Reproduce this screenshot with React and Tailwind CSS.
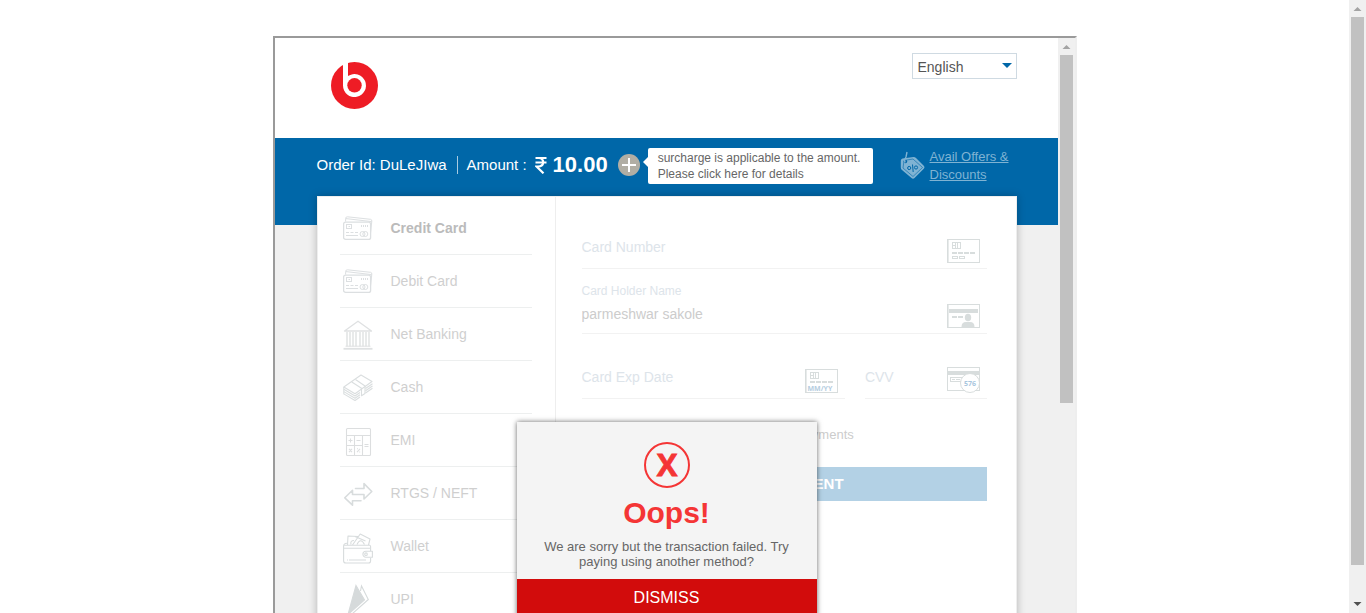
import React from "react";

function CardsIcon() {
  return (
    <svg width="30" height="26" viewBox="0 0 30 26" fill="none" stroke="#dcdfe1" strokeWidth="1">
      <path d="M2.5 6.5 L2.8 3 Q3 1.6 4.5 1.8 L27.5 4.3 Q29 4.6 28.8 6 L27.6 17.5" />
      <path d="M3 3.6 L28.6 6.6" />
      <rect x="0.6" y="7.2" width="27" height="17.2" rx="2" strokeWidth="1.3" />
      <rect x="3.5" y="9.5" width="5" height="4" />
      <path d="M5.5 11.5h1.5M18.5 10v2M20.5 10v2M22.5 10v2M24.5 10v2" />
      <path d="M3 17.5h3M7.5 17.5h3M12 17.5h3M3 20.5h12" />
      <circle cx="19.5" cy="19" r="2.5" />
      <circle cx="22.3" cy="19" r="2.5" />
    </svg>
  );
}

function BankIcon() {
  return (
    <svg width="30" height="32" viewBox="0 -2 30 32" fill="none" stroke="#dfe1e2" strokeWidth="1.3">
      <path d="M1.5 11 L15 1.2 L28.5 11 Z" strokeLinejoin="round" />
      <path d="M4 12v14.5M7 12v14.5M10 12v14.5M13 12v14.5M17 12v14.5M20 12v14.5M23 12v14.5M26 12v14.5" strokeWidth="1.4" />
      <path d="M2.5 26.2h25" strokeWidth="1" />
      <path d="M0.5 28.8h29" strokeWidth="1.8" />
    </svg>
  );
}

function CashIcon() {
  return (
    <svg width="30" height="30" viewBox="0 -2 30 30" fill="none" stroke="#dadedf" strokeWidth="1.1" strokeLinejoin="round">
      <path d="M0.8 13 L18 1 L29 7.5 L12 19.8 Z" />
      <path d="M0.8 15.3 L12 22 L17 18.5M0.8 17.6 L12 24.2 L17 20.7M0.8 19.9 L12 26.5 L17 23" />
      <path d="M0.8 13v7.2" />
      <path d="M22.5 14.5 L29.5 9.8M22.5 16.8 L29.5 12M22.5 19 L29.5 14.3" />
      <path d="M8.8 8 L18.5 14.3 V21.8 L22 19.5 V12 L12.5 5.5" />
    </svg>
  );
}

function CalculatorIcon() {
  return (
    <svg width="30" height="34" viewBox="0 -4 30 34" fill="none" stroke="#dcdedf" strokeWidth="1.1">
      <rect x="3.5" y="1.5" width="24" height="27" rx="1" />
      <path d="M3.5 8.5h24M11.5 8.5v20M19.5 8.5v20M3.5 18.5h16" />
      <path d="M5.5 13.5h4M7.5 11.5v4M13.5 13.5h4M21.5 17.5h4M21.5 19.5h4M6 21.8l3 3.4M9 21.8l-3 3.4M17 21.8l-3 3.4M14 21.8h1M16.2 25h1" />
    </svg>
  );
}

function TransferIcon() {
  return (
    <svg width="30" height="30" viewBox="0 -4 30 30" fill="none" stroke="#d8dcdd" strokeWidth="1.6" strokeLinejoin="round" strokeLinecap="round">
      <path d="M12.5 6.5H21V1.6L28.8 9.5 21 17V12.5H9.5V8.3L1.8 15.8 9.5 23.2V18.8H18" />
    </svg>
  );
}

function WalletIcon() {
  return (
    <svg width="30" height="35" viewBox="0 -4 30 35" fill="none" stroke="#d8dcdd" strokeWidth="1.1" strokeLinejoin="round">
      <path d="M4.5 12 L5 3 L15 3.5M8 11.5 Q7 7.5 11 7.5M9.5 12 L17.2 1 L27 6 L25.5 12" />
      <path d="M14 11.5 Q17.5 4 21.5 11.5M12 3.5 L22.5 8" />
      <path d="M4 10.3 Q0.6 10.5 0.6 13 V28 Q0.6 30 3 30 H25.5 Q27.6 30 27.6 28 V25M27.6 18 V13.5 Q27.6 12 25.5 12 M1 12.3h26M1 15.3h26M4 27h1M6 27h17" />
      <path d="M29.4 18.2h-6.5a3 3 0 0 0 0 6h6.5z" />
      <circle cx="23" cy="21.2" r="1.3" />
    </svg>
  );
}

function UpiIcon() {
  return (
    <svg width="30" height="32" viewBox="0 -2 30 32" fill="none" stroke="#d6dadb" strokeWidth="1.1">
      <path d="M13 0.5 L21.5 15 L5 29.5 Z" fill="#d6dadb" />
      <path d="M17.5 6 L18.5 1 L25.3 14.5 L9 29" />
    </svg>
  );
}

function NumberIcon() {
  return (
    <svg width="33" height="24" viewBox="0 0 33 24" fill="none" stroke="#d8dddd">
      <rect x="0.5" y="0.5" width="32" height="23" />
      <path d="M1.5 0v24" strokeOpacity="0.6" />
      <rect x="5.5" y="3.5" width="8" height="6" />
      <path d="M8.5 3v7M10.5 3v7M5 6.5h3" />
      <path d="M5 14h5M11 14h5M17 14h5M23 14h5" strokeWidth="2" />
      <rect x="5.5" y="17.5" width="5" height="2" />
      <rect x="12.5" y="17.5" width="5" height="2" />
    </svg>
  );
}

function HolderIcon() {
  return (
    <svg width="33" height="24" viewBox="0 0 33 24" fill="none" stroke="#d8dddd">
      <rect x="0.5" y="0.5" width="32" height="23" />
      <path d="M1.5 0v24" strokeOpacity="0.6" />
      <path d="M2 7h29" strokeWidth="4" />
      <path d="M5 13h5M11 13h5" strokeWidth="2" />
      <ellipse cx="21" cy="13.5" rx="3.2" ry="3.8" fill="#d8dddd" stroke="none" />
      <path d="M14.5 23 Q14.5 18 19 18 H23 Q27.5 18 27.5 23 Z" fill="#d8dddd" stroke="none" />
    </svg>
  );
}

function ExpiryIcon() {
  return (
    <svg width="33" height="24" viewBox="0 0 33 24" fill="none" stroke="#d8dddd">
      <rect x="0.5" y="0.5" width="32" height="23" />
      <path d="M1.5 0v24" strokeOpacity="0.6" />
      <rect x="5.5" y="3.5" width="8" height="6" />
      <path d="M8.5 3v7M10.5 3v7M5 6.5h3" />
      <path d="M5 13h5M11 13h5M17 13h5M23 13h5" strokeWidth="2" />
      <text x="2.5" y="21.5" fontSize="7" fontWeight="700" className="font-['Open_Sans',sans-serif]" fill="#b5cde0" stroke="none">MM/YY</text>
    </svg>
  );
}

function CvvIcon() {
  return (
    <svg width="33" height="26" viewBox="0 0 33 26" fill="none" stroke="#d8dddd">
      <rect x="0.5" y="0.5" width="32" height="23" />
      <path d="M1 6h31" strokeWidth="4" />
      <rect x="3.5" y="10.5" width="14" height="4" />
      <path d="M5 12.5h3M9 12.5h4" />
      <circle cx="23" cy="16" r="9.5" fill="#fff" />
      <text x="17" y="18.5" fontSize="7" fontWeight="700" className="font-['Open_Sans',sans-serif]" fill="#a9c6de" stroke="none">576</text>
    </svg>
  );
}

function OfferTagIcon() {
  return (
    <svg width="26" height="30" viewBox="0 0 26 30" fill="none" aria-hidden="true">
      <path d="M2.5 7.5 L13.5 6 Q15 6 16 7 L24 15 Q25 16.2 24 17.4 L14.5 27 Q13 28.4 11.5 27 L2 19 Q0.8 18 0.8 16.5 L0.8 9.5 Q1 7.8 2.5 7.5 Z" fill="#7fb3d3" />
      <path d="M4 9.5 L13 8 L22.5 16.5 L13 25.5 L3 17 Z" stroke="#0067a8" strokeWidth="0.6" />
      <circle cx="5.5" cy="10.5" r="1.7" fill="#0067a8" />
      <path d="M5.2 11.5 Q3.8 9.5 6 6 L7 1" stroke="#7fb3d3" strokeWidth="1.4" />
      <circle cx="9.2" cy="17" r="1.6" stroke="#0067a8" strokeWidth="1" />
      <circle cx="16" cy="16.5" r="1.6" stroke="#0067a8" strokeWidth="1" />
      <path d="M12.5 13.5 L13.2 21" stroke="#0067a8" strokeWidth="1" />
    </svg>
  );
}

function Scrollbar({ children, arrow = "#a3a3a3" }) {
  return (
    <div className="flex w-[17px] shrink-0 flex-col bg-[#f0f0f0]" aria-hidden="true">
      <svg className="shrink-0" width="17" height="17" viewBox="0 0 17 17">
        <path d="M4.5 11 L8.5 7 L12.5 11 Z" fill={arrow} />
      </svg>
      {children}
    </div>
  );
}

function Field({ id, label, icon, value, type = "text" }) {
  return (
    <div className="flex h-[65px] items-end border-b border-[#f2f2f2]">
      <div className="flex min-w-0 flex-1 flex-col">
        {value && (
          <label htmlFor={id} className="text-xs leading-2 text-[#dde4ea]">
            {label}
          </label>
        )}
        <input
          id={id}
          type={type}
          aria-label={label}
          placeholder={value ? undefined : label}
          defaultValue={value}
          className={
            "w-full bg-transparent text-sm text-[#cccccc] outline-none placeholder:text-[#dde4ea] " +
            (value ? "h-[38px]" : "h-[42px]")
          }
        />
      </div>
      <span className="mr-[7px] mb-[5px] shrink-0">{icon}</span>
    </div>
  );
}

const methods = [
  { name: "Credit Card", Icon: CardsIcon, active: true },
  { name: "Debit Card", Icon: CardsIcon },
  { name: "Net Banking", Icon: BankIcon },
  { name: "Cash", Icon: CashIcon },
  { name: "EMI", Icon: CalculatorIcon },
  { name: "RTGS / NEFT", Icon: TransferIcon },
  { name: "Wallet", Icon: WalletIcon },
  { name: "UPI", Icon: UpiIcon },
];

function Header() {
  return (
    <header className="bg-white">
      <div className="mx-auto flex h-[100px] w-full max-w-[700px] items-start justify-between">
        <svg className="mt-6 ml-[14px]" width="47" height="47" viewBox="0 0 47 47" role="img" aria-label="Logo">
          <circle cx="23.5" cy="23.5" r="23.5" fill="#ee1c25" />
          <path d="M12 0 H17 V14 A11.5 11.5 0 1 1 12 23.5 Z" fill="#fff" />
          <circle cx="23.5" cy="23.3" r="7.2" fill="#ee1c25" />
        </svg>
        <div className="relative mt-[15px]">
          <select
            aria-label="Language"
            className="h-[26px] w-[105px] appearance-none border border-[#cfdae2] bg-white pt-[2px] pl-[5px] text-sm text-[#555555]"
          >
            <option>English</option>
            <option>Hindi</option>
          </select>
          <svg className="pointer-events-none absolute top-[10px] right-[5px]" width="10" height="5" viewBox="0 0 10 5">
            <path d="M0 0H10L5 5Z" fill="#0067a8" />
          </svg>
        </div>
      </div>
    </header>
  );
}

function OrderBar() {
  return (
    <section className="bg-[#0067a8] pt-[10px] pb-[41px]">
      <div className="mx-auto flex h-9 w-full max-w-[700px] items-start text-white">
        <div className="flex h-[34px] items-center">
          <span className="text-[15px]">Order Id: DuLeJIwa</span>
          <span className="mr-[9px] ml-[10px] h-[18px] w-px bg-[#a8cbe1]" />
          <span className="text-[15px]">Amount :</span>
          <span className="ml-2 flex items-center gap-[6px] text-[22px] leading-8 font-bold">
            <svg width="12" height="18" viewBox="0 0 12 18" fill="none" stroke="#fff" strokeWidth="2.2" role="img" aria-label="Rupees">
              <path d="M0.5 2H11.5M0.5 6.5H11.5M1 2H4Q8.2 2.5 8.2 6.3Q8 10.5 3 10.5H1.5L8.5 17.3" />
            </svg>
            10.00
          </span>
          <button type="button" aria-label="Show surcharge" className="ml-[10px]">
            <svg width="22" height="22" viewBox="0 0 22 22">
              <circle cx="11" cy="11" r="11" fill="#b1aea4" />
              <path d="M11 4v14M4 11h14" stroke="#fff" strokeWidth="2" />
            </svg>
          </button>
        </div>
        <button
          type="button"
          className="relative ml-2 h-9 w-[225px] rounded-[2px] bg-white pl-[10px] text-left text-xs leading-4 text-[#666666]"
        >
          <svg className="absolute top-[9px] -left-[5px]" width="5" height="10" viewBox="0 0 5 10">
            <path d="M5 0V10L0 5Z" fill="#fff" />
          </svg>
          surcharge is applicable to the amount. Please click here for details
        </button>
        <a href="#offers" className="ml-auto flex items-center gap-1 text-[#7fb3d3]">
          <OfferTagIcon />
          <span className="w-[87px] text-[13px] leading-[18px] underline">Avail Offers &amp; Discounts</span>
        </a>
      </div>
    </section>
  );
}

function FailureDialog() {
  return (
    <div
      role="alertdialog"
      aria-labelledby="failure-title"
      aria-describedby="failure-text"
      className="absolute inset-x-0 top-[384px] mx-auto w-[300px] bg-[#f4f4f4] text-center shadow-[0_0_5px_rgba(0,0,0,0.6)]"
    >
      <div className="flex flex-col items-center px-5 pt-5 pb-[10px]">
        <svg width="46" height="46" viewBox="0 0 46 46" aria-hidden="true">
          <circle cx="23" cy="23" r="22" fill="none" stroke="#f43535" strokeWidth="2" />
          <text x="23" y="34" textAnchor="middle" fontSize="31" fontWeight="700" className="font-['Open_Sans',sans-serif]" fill="#f43535" stroke="#f43535" strokeWidth="0.8">X</text>
        </svg>
        <h2 id="failure-title" className="mt-[7px] text-[30px] leading-9 font-bold text-[#f43535]">Oops!</h2>
        <p id="failure-text" className="mt-2 text-[13px] leading-[15px] text-[#666666]">
          We are sorry but the transaction failed. Try paying using another method?
        </p>
      </div>
      <button type="button" className="h-[38px] w-full bg-[#d20c0c] text-base text-white">DISMISS</button>
    </div>
  );
}

export default function App() {
  return (
    <div className="flex h-screen overflow-hidden bg-white font-['Liberation_Sans',Arial,sans-serif]">
      <main className="min-w-0 flex-1 pt-9 pl-px">
        <div className="mx-auto flex w-full max-w-[804px] border-2 border-t-[#9a9a9a] border-r-[#eeeeee] border-b-[#eeeeee] border-l-[#9a9a9a]">
          <div className="relative min-w-0 flex-1 bg-[#f0f0f0] pb-10">
            <Header />
            <OrderBar />
            <div className="relative mx-auto -mt-[29px] flex w-full max-w-[700px] border border-[#eeeeee] bg-white shadow-[0_0_8px_rgba(0,0,0,0.25)]">
              <nav className="w-[238px] shrink-0 border-r border-[#eeeeee] pt-[5px] pl-[22px] pr-[23px]">
                <ul>
                  {methods.map(({ name, Icon, active }) => (
                    <li key={name} className="border-b border-[#edefef]">
                      <button
                        type="button"
                        className={
                          "flex h-[52px] w-full items-center gap-[18px] pl-[3px] text-left text-sm " +
                          (active ? "font-bold text-[#bbbbbb]" : "text-[#cfcfcf]")
                        }
                      >
                        <Icon />
                        {name}
                      </button>
                    </li>
                  ))}
                </ul>
              </nav>
              <form className="min-w-0 flex-1 pt-[7px] pr-[29px] pl-[26px]" onSubmit={(e) => e.preventDefault()}>
                <Field id="card-number" label="Card Number" icon={<NumberIcon />} />
                <Field id="card-holder" label="Card Holder Name" icon={<HolderIcon />} value="parmeshwar sakole" />
                <div className="grid grid-cols-[13fr_6fr] gap-5">
                  <Field id="card-expiry" label="Card Exp Date" icon={<ExpiryIcon />} />
                  <Field id="card-cvv" label="CVV" icon={<CvvIcon />} type="password" />
                </div>
                <div className="mt-[26px] flex h-5 items-center gap-[10px]">
                  <input id="save-card" type="checkbox" />
                  <label htmlFor="save-card" className="text-[13px] text-[#cccccc]">
                    Securely save this card for faster payments
                  </label>
                </div>
                <button type="submit" className="mt-[22px] h-[34px] w-full bg-[#b3d1e5] text-[15px] font-bold text-white">
                  MAKE PAYMENT
                </button>
              </form>
            </div>
            <FailureDialog />
          </div>
          <Scrollbar>
            <div className="mx-[2px] h-[348px] bg-[#c1c1c1]" />
          </Scrollbar>
        </div>
      </main>
      <Scrollbar>
        <div className="mx-[2px] mb-[31px] flex-1 bg-[#c1c1c1]" />
        <svg className="shrink-0" width="17" height="17" viewBox="0 0 17 17">
          <path d="M4.5 6 L8.5 10 L12.5 6 Z" fill="#505050" />
        </svg>
      </Scrollbar>
    </div>
  );
}
